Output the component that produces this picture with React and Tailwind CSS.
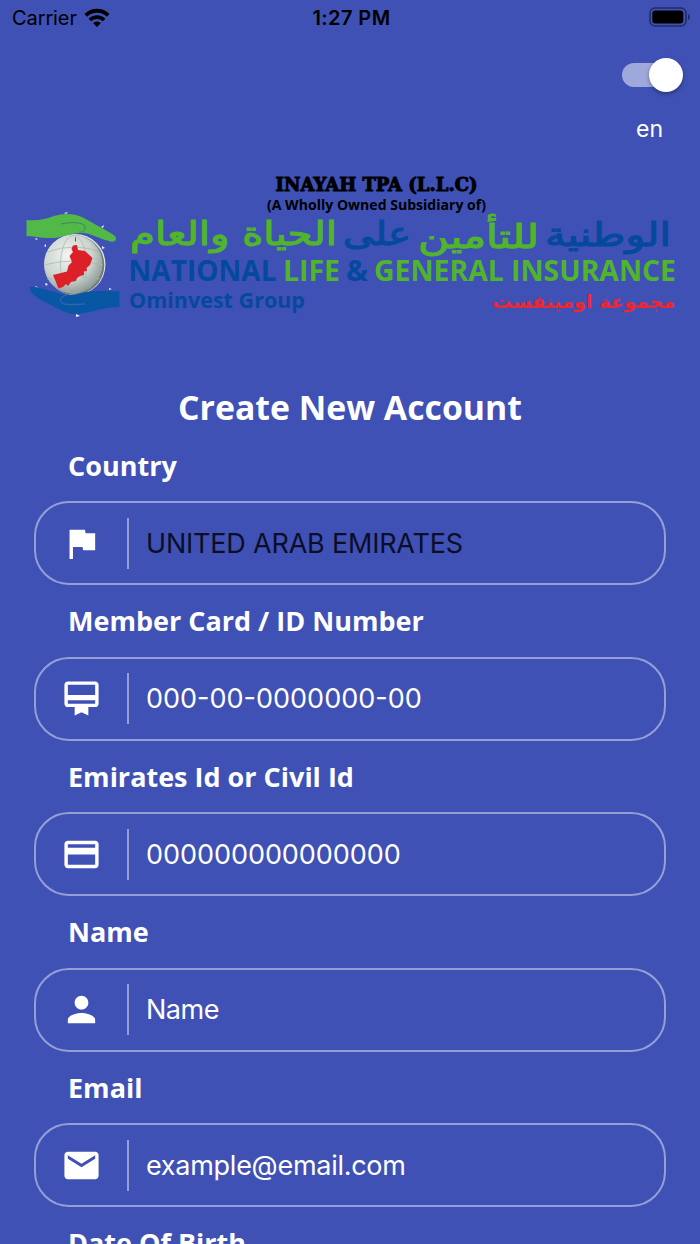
import React from "react";
import { MdFlag, MdCardMembership, MdPayment, MdPerson, MdEmail } from "react-icons/md";

const fields = [
  { label: "Country", icon: MdFlag, value: "UNITED ARAB EMIRATES", style: "text-[#0b0e26] tracking-[-0.2px]" },
  { label: "Member Card / ID Number", icon: MdCardMembership, value: "000-00-0000000-00", style: "text-white" },
  { label: "Emirates Id or Civil Id", icon: MdPayment, value: "000000000000000", style: "text-white tracking-[-0.05px]" },
  { label: "Name", icon: MdPerson, value: "Name", style: "text-white tracking-[-0.5px]" },
  { label: "Email", icon: MdEmail, value: "example@email.com", style: "text-white tracking-[-0.27px]" },
];

function StatusBar() {
  return (
    <div className="grid h-9 grid-cols-3 items-center pl-3 pr-[9px] text-black">
      <div className="flex items-center gap-[7px]">
        <span className="text-[20px] leading-none tracking-[-0.1px]">Carrier</span>
        <svg className="-mt-[2px]" width="26" height="19" viewBox="0 0 26 19" fill="none" stroke="black" strokeWidth="3.8">
          <path d="M1.8 7.4a15.8 15.8 0 0 1 22.4 0" />
          <path d="M5.9 12a10 10 0 0 1 14.200 0" />
          <path d="M13 19l-3.9-3.900a5.600 5.600 0 0 1 7.800 0z" fill="black" stroke="none" />
        </svg>
      </div>
      <span className="text-center text-[20px] font-semibold leading-none tracking-[0.4px]">1:27 PM</span>
      <svg className="-mt-[2px] justify-self-end" width="42" height="20" viewBox="0 0 42 20">
        <rect x="1" y="1" width="36" height="18" rx="5" fill="none" stroke="#232c63" strokeWidth="1.6" />
        <rect x="3.3" y="3.5" width="31" height="13" rx="3" fill="black" />
        <path d="M39 7c2.6 1 2.6 5 0 6z" fill="#232c63" />
      </svg>
    </div>
  );
}

function Logo() {
  return (
    <svg className="block" width="700" height="160" viewBox="0 165 700 160">
      <defs>
        <radialGradient id="globe" cx="40%" cy="35%" r="70%">
          <stop offset="0" stopColor="#f1f4f2" />
          <stop offset="0.6" stopColor="#cbd4cf" />
          <stop offset="1" stopColor="#84928e" />
        </radialGradient>
      </defs>

      <circle cx="75" cy="264.5" r="30.5" fill="#dfe3e8" />
      <circle cx="74.5" cy="265" r="29.8" fill="#6f7878" />
      <circle cx="73.3" cy="264.3" r="29.3" fill="url(#globe)" />
      <g fill="none" stroke="#a7b3ae" strokeWidth="0.7">
        <ellipse cx="73.5" cy="264.5" rx="13" ry="29" />
        <path d="M47 252q27-10 53 0M44 265q30-8 59 0M47 279q27-5 53 0" />
      </g>
      <path d="M75 238L76 237V241L75 242ZM73 245.500L77 245L78 250L85 251L92.500 258L90 265L86.500 268L87 271L84 271.500V275L80 276L77 278L76 281L71 282L68 286L66 284L63 287L58.500 288.500L53 275L67 271.500L68.500 265.500L72 262L69.500 256L73 252L71.500 249Z" fill="#dc2027" />
      <g fill="#eef1f5">
        <path d="M101 227l3-2-1 3zM35 238l3 1-2 1zM36 286l2 2-3-1zM76 314l4 2-4 1zM109 288l3 1-3 1zM44 246l2-2v3zM64 213l4-1-2 2zM102 246l3 2-3 1zM45 283l3 1-2 2z" />
      </g>
      <path d="M26.500 220C38 221 46 219 54 216C64 213 75 213 84 218C96 225 108 231 115 236C118 240 114 243 109 241C99 239 93 234 84 233C70 232 62 239 48 238C40 238 33 236 26.500 236Z" fill="#52b848" />
      <path d="M61 224C70 222 80 222 84 225C87 229 84 233 79 232" fill="none" stroke="#3d7e63" strokeWidth="0.9" />
      <path d="M30 288C31 286 35 287 39 288C49 290 57 293 65 295C77 296 86 290 98 291H119.500V307C105 307 93 312 78 314C65 315 54 306 43 301C37 298 30 293 30 288Z" fill="#0857a5" />
      <path d="M67 295C60 296 58 302 64 304C71 305 79 304 85 304" fill="none" stroke="#426fae" strokeWidth="0.9" />

      <text x="275.500" y="190.500" textLength="202" lengthAdjust="spacingAndGlyphs" fill="black" stroke="black" strokeWidth="1" className="font-['DejaVu_Serif'] text-[18px] font-bold">INAYAH TPA (L.L.C)</text>
      <text x="267" y="210" textLength="219" lengthAdjust="spacingAndGlyphs" fill="black" className="font-['Open_Sans'] text-[14px] font-bold">(A Wholly Owned Subsidiary of)</text>

      <g className="font-['DejaVu_Sans'] text-[33px]" strokeWidth="1.1">
        <text x="130" y="244.500" textLength="207" lengthAdjust="spacingAndGlyphs" fill="#51b52c" stroke="#51b52c">الحياة والعام</text>
        <text x="343" y="244.500" textLength="68" lengthAdjust="spacingAndGlyphs" fill="#04499c" stroke="#04499c">على</text>
        <text x="418" y="247.500" textLength="121" lengthAdjust="spacingAndGlyphs" fill="#51b52c" stroke="#51b52c">للتأمين</text>
        <text x="545" y="245.500" textLength="126" lengthAdjust="spacingAndGlyphs" fill="#04499c" stroke="#04499c">الوطنية</text>
      </g>

      <g className="font-['Open_Sans'] text-[28px] font-bold">
        <text x="128.500" y="280.500" textLength="148" lengthAdjust="spacingAndGlyphs" fill="#04499c">NATIONAL</text>
        <text x="283" y="280.500" textLength="57" lengthAdjust="spacingAndGlyphs" fill="#51b52c">LIFE</text>
        <text x="346" y="280.500" textLength="22" lengthAdjust="spacingAndGlyphs" fill="#04499c">&amp;</text>
        <text x="374" y="280.500" textLength="302" lengthAdjust="spacingAndGlyphs" fill="#51b52c">GENERAL INSURANCE</text>
      </g>
      <text x="129" y="308" textLength="176" lengthAdjust="spacingAndGlyphs" fill="#04499c" className="font-['Open_Sans'] text-[21.5px] font-bold">Ominvest Group</text>
      <text x="492" y="308" textLength="183" lengthAdjust="spacingAndGlyphs" fill="#ed2630" className="font-['DejaVu_Sans'] text-[18px] font-bold">مجموعة اومينفست</text>
    </svg>
  );
}

function Field({ label, icon: Icon, value, style }) {
  return (
    <div className="h-[155.5px]">
      <label className="flex h-[54px] items-center pl-[68px] font-['Open_Sans'] text-[27px] font-bold leading-none">{label}</label>
      <div className="mx-[34px] mt-[9px] flex h-[84px] items-center rounded-[35px] border-2 border-white/45">
        <Icon className="ml-[24.5px] size-[41px] shrink-0 text-white" />
        <div className="ml-[25.5px] h-[51px] w-[2px] shrink-0 bg-white/45" />
        <span className={"ml-[17px] whitespace-nowrap text-[27px] leading-none " + style}>{value}</span>
      </div>
    </div>
  );
}

export default function App() {
  const [on, setOn] = React.useState(true);

  return (
    <div className="h-[1244px] w-[700px] overflow-hidden bg-[#3f51b5] font-['Inter',sans-serif] text-white">
      <StatusBar />
      <div className="flex h-[129px] flex-col items-end pt-[21.5px] pr-[17px]">
        <button
          className={on ? "flex h-[34px] w-[61px] items-center justify-end" : "flex h-[34px] w-[61px] items-center justify-start"}
          onClick={() => setOn((v) => !v)}
        >
          <span className="-mr-[27px] h-6 w-[54px] rounded-full bg-white/50" />
          <span className="z-10 size-[34px] shrink-0 rounded-full bg-white shadow-[0_2px_4px_rgba(0,0,0,0.35)]" />
        </button>
        <span className="mt-[26.5px] mr-[20px] text-[23px] leading-none">en</span>
      </div>
      <Logo />
      <h1 className="mt-[57px] flex h-[52px] items-center justify-center font-['Open_Sans'] text-[33.8px] font-bold leading-none">Create New Account</h1>
      <div className="mt-[4px]">
        {fields.map((f) => (
          <Field key={f.label} {...f} />
        ))}
        <label className="flex h-[54px] items-center pl-[68px] font-['Open_Sans'] text-[27px] font-bold leading-none">Date Of Birth</label>
      </div>
    </div>
  );
}
